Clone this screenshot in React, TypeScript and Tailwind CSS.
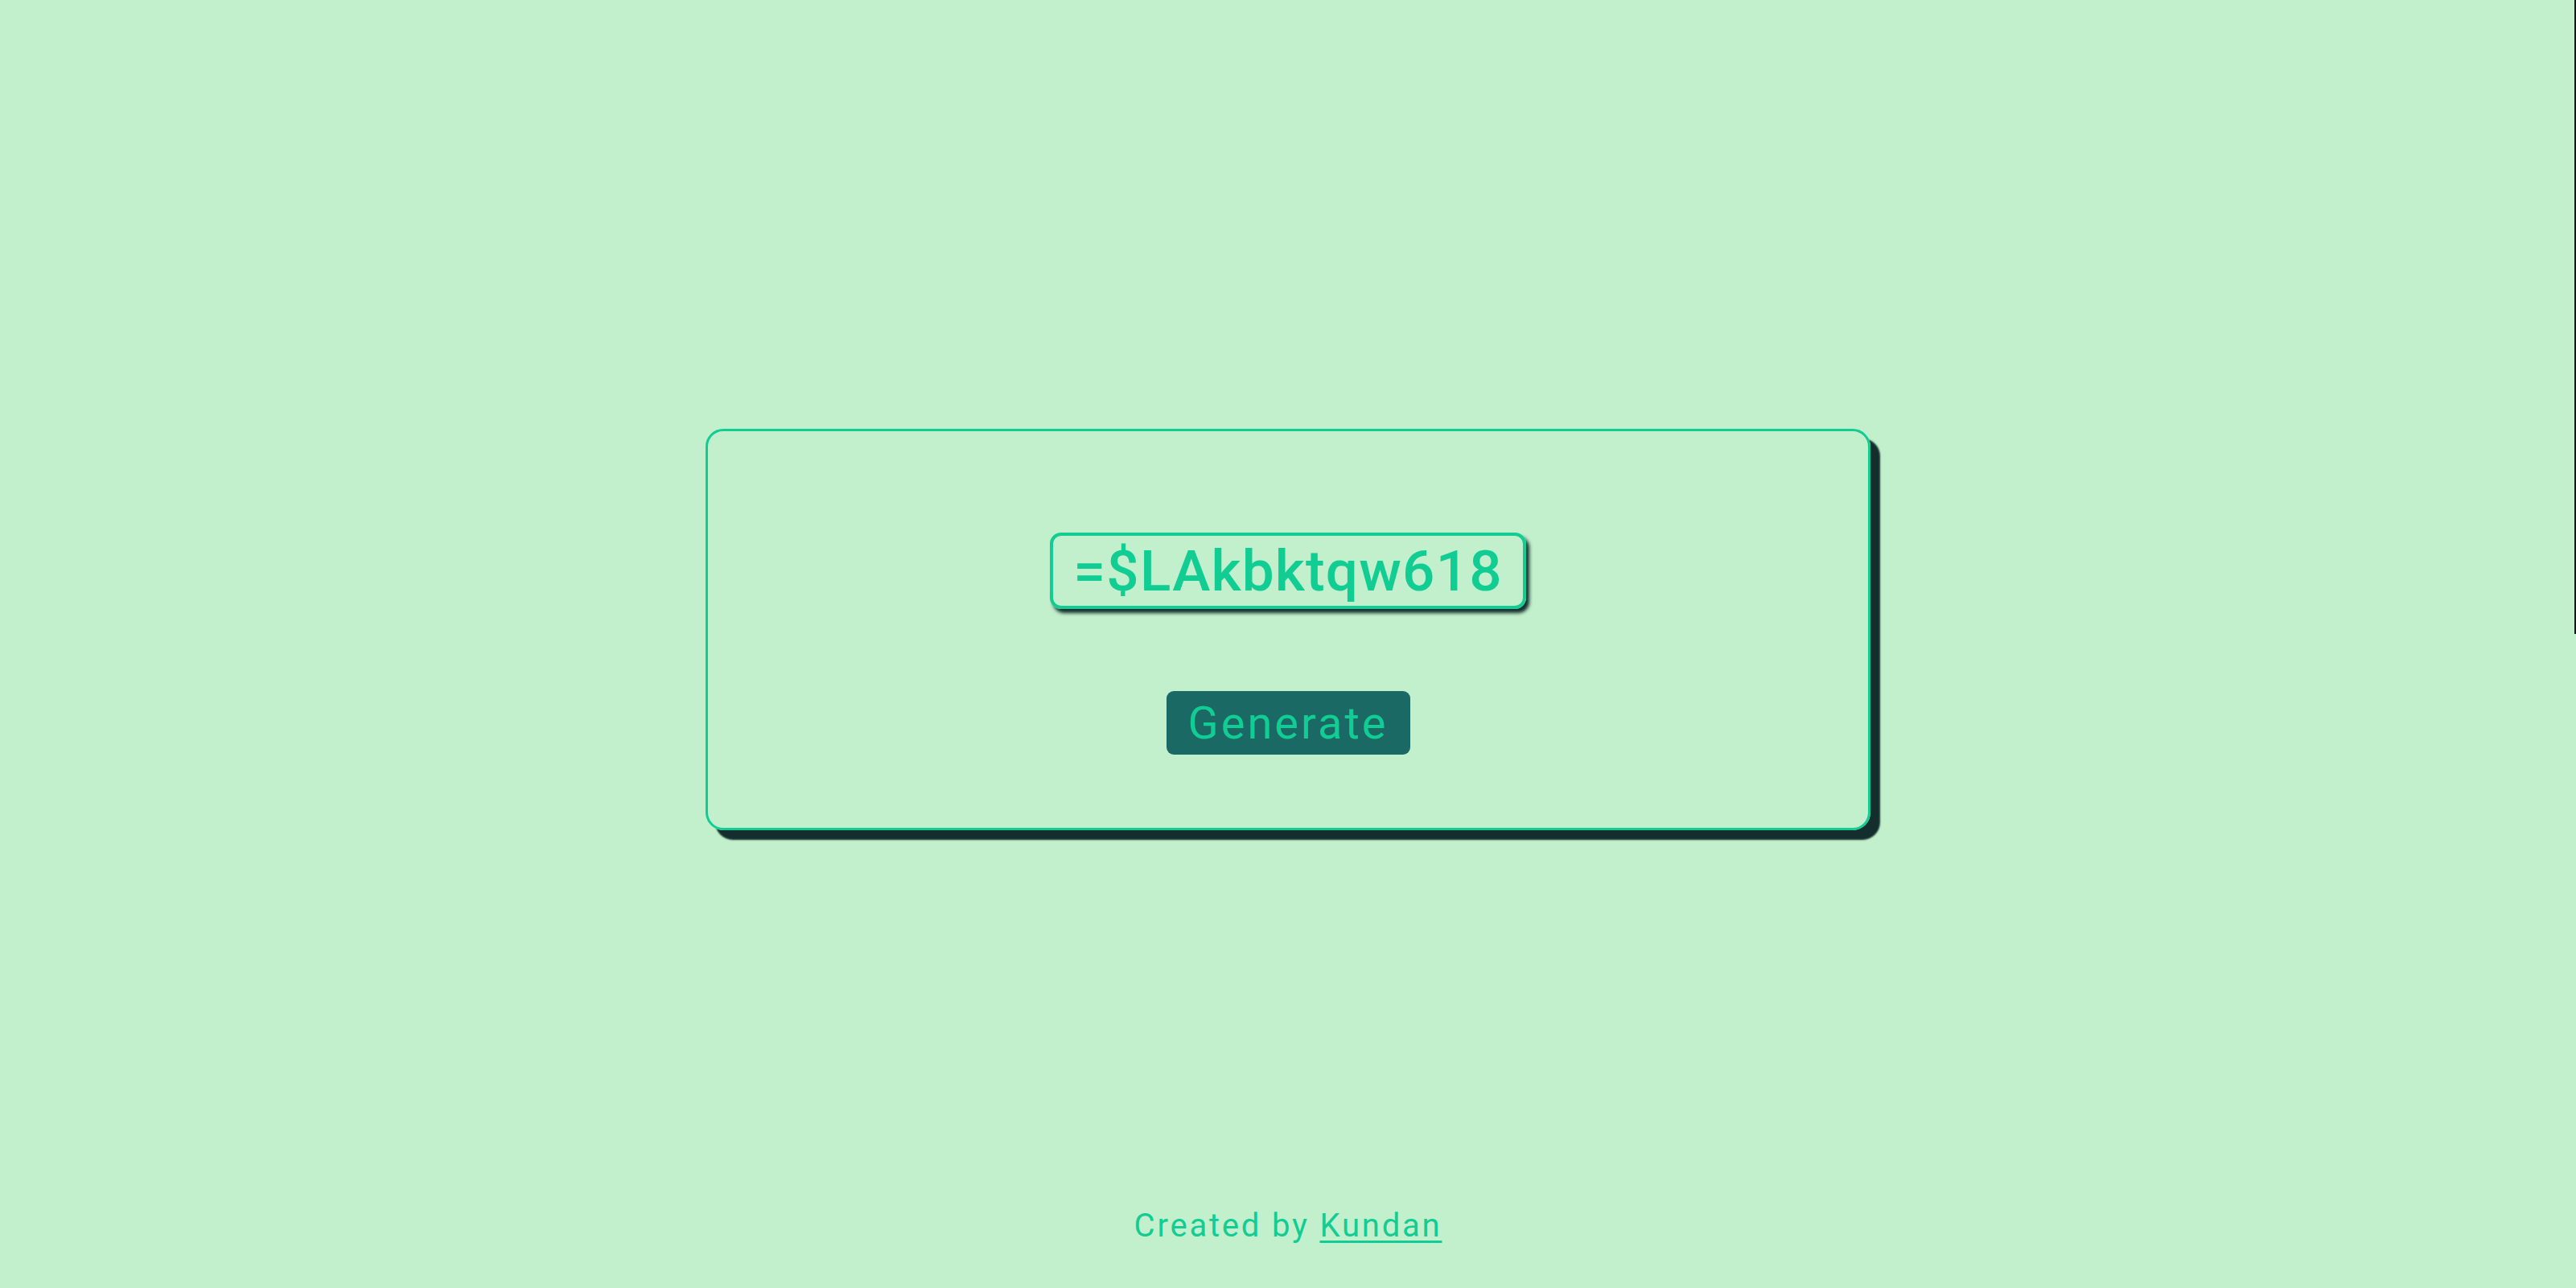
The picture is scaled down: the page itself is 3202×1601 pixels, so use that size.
import React from "react";

export default function App() {
  return (
    <div
      className="relative w-full h-[1601px] bg-[#c2f0cc] flex flex-col items-center overflow-hidden"
      style={{ fontFamily: "Roboto, 'Noto Sans', sans-serif" }}
    >
      <div className="absolute right-0 top-0 w-[2px] h-[788px] bg-[#111a18]" />
      <div className="mt-[533px] w-[1448px] h-[499px] border-[3px] border-[#12cd93] rounded-[22px] shadow-[12px_12px_2px_#132e2c] flex flex-col items-center pt-[126px]">
        <div className="w-[592px] h-[95px] border-[4px] border-[#12cd93] rounded-[14px] shadow-[4px_5px_4px_#132e2c] flex items-center justify-center">
          <span className="text-[71px] leading-none font-medium text-[#12cd93] tracking-[1.2px]">
            =$LAkbktqw618
          </span>
        </div>
        <button className="mt-[102px] w-[303px] h-[79px] rounded-[9px] bg-[#1b6965] text-[#12cd93] text-[56px] font-normal leading-none flex items-center justify-center tracking-[3px]">
          Generate
        </button>
      </div>
      <div className="mt-[472px] text-[40px] leading-none text-[#12cd93] tracking-[2.8px]">
        Created by{" "}
        <a href="#" className="underline decoration-[3px] underline-offset-[5px]">
          Kundan
        </a>
      </div>
    </div>
  );
}
